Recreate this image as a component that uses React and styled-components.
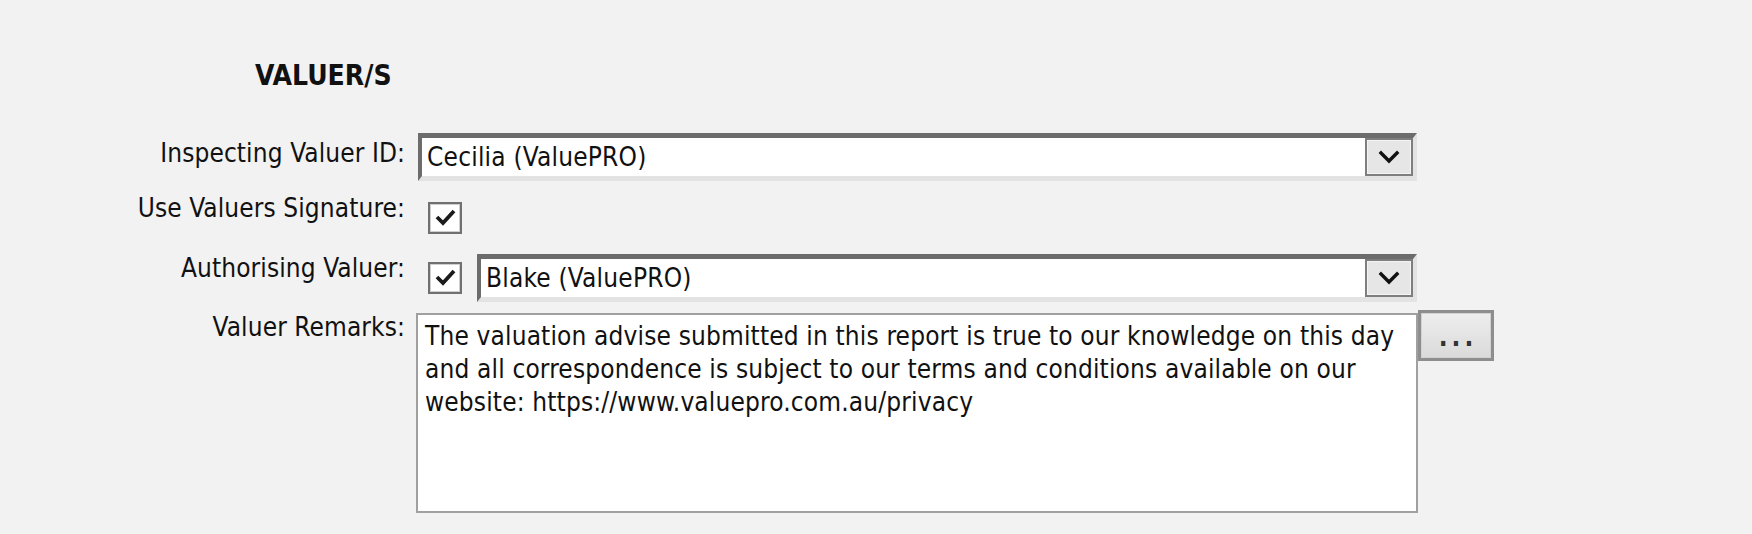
import React from 'react';
import styled, { createGlobalStyle } from 'styled-components';

const GlobalStyle = createGlobalStyle`
  html, body {
    margin: 0;
    padding: 0;
    background: #f2f2f2;
  }
`;

const remarks =
  'The valuation advise submitted in this report is true to our knowledge on this day\n' +
  'and all correspondence is subject to our terms and conditions available on our\n' +
  'website: https://www.valuepro.com.au/privacy';

const Chevron = () => (
  <svg width="22" height="14" viewBox="0 0 22 14">
    <polyline points="3,3 11,11 19,3" fill="none" stroke="#111" strokeWidth="3.4" strokeLinecap="square" />
  </svg>
);

const Check = () => (
  <svg width="27" height="27" viewBox="0 0 27 27">
    <polyline points="5,12 11,18 22,6" fill="none" stroke="#1b1b1b" strokeWidth="3.8" />
  </svg>
);

const Combo = ({ value }) => (
  <ComboBox>
    <ComboText>{value}</ComboText>
    <DropButton><Chevron /></DropButton>
  </ComboBox>
);

const App = () => {
  return (
    <Page>
      <GlobalStyle />
      <Title>VALUER/S</Title>

      <Row top={40}>
        <Label pad={5}>Inspecting Valuer ID:</Label>
        <Field>
          <Combo value="Cecilia (ValuePRO)" />
        </Field>
      </Row>

      <Row top={12}>
        <Label>Use Valuers Signature:</Label>
        <Field>
          <CheckBox pad={9}><Check /></CheckBox>
        </Field>
      </Row>

      <Row top={19}>
        <Label>Authorising Valuer:</Label>
        <Field>
          <CheckBox pad={9}><Check /></CheckBox>
          <ComboSlot><Combo value="Blake (ValuePRO)" /></ComboSlot>
        </Field>
      </Row>

      <Row top={8}>
        <Label pad={2}>Valuer Remarks:</Label>
        <Field wide>
          <Remarks readOnly value={remarks} />
          <EllipsisButton>...</EllipsisButton>
        </Field>
      </Row>
    </Page>
  );
};

const Page = styled.div`
  min-height: 534px;
  box-sizing: border-box;
  padding-top: 59px;
  background: #f2f2f2;
  color: #111;
  font-family: 'DejaVu Sans Condensed', 'DejaVu Sans', sans-serif;
  font-size: 26px;
`;

const Title = styled.div`
  padding-left: 255px;
  font-size: 28px;
  font-weight: 700;
  line-height: 34px;
  color: #111;
`;

const Row = styled.div`
  display: flex;
  align-items: flex-start;
  margin-top: ${props => props.top}px;
`;

const Label = styled.div`
  width: 405px;
  flex: none;
  text-align: right;
  line-height: 30px;
  letter-spacing: 0.1px;
  padding-top: ${props => props.pad || 0}px;
`;

const Field = styled.div`
  display: flex;
  align-items: flex-start;
  margin-left: 11px;
  width: ${props => (props.wide ? 1078 : 1001)}px;
`;

const ComboBox = styled.div`
  flex: 1;
  display: flex;
  align-items: stretch;
  height: 48px;
  box-sizing: border-box;
  margin-left: 2px;
  background: #fff;
  border-style: solid;
  border-width: 5px 4px 5px 4px;
  border-color: #6c6c6c #e3e3e3 #e3e3e3 #6c6c6c;
`;

const ComboText = styled.div`
  flex: 1;
  display: flex;
  align-items: center;
  padding-left: 5px;
  line-height: 30px;
  letter-spacing: 0.2px;
  white-space: nowrap;
`;

const DropButton = styled.div`
  width: 48px;
  flex: none;
  box-sizing: border-box;
  display: flex;
  align-items: center;
  justify-content: center;
  background: #e6e6e6;
  border: 2px solid #7e7e7e;
  box-shadow: inset 0 0 0 1px #f4f4f4;
`;

const ComboSlot = styled.div`
  flex: 1;
  display: flex;
  margin-left: 13px;
  margin-top: 1px;
`;

const CheckBox = styled.div`
  width: 34px;
  height: 32px;
  flex: none;
  box-sizing: border-box;
  margin-left: 12px;
  margin-top: ${props => props.pad || 0}px;
  display: flex;
  align-items: center;
  justify-content: center;
  background: #fff;
  border: 2px solid #707070;
  box-shadow: inset 0 0 0 1px #cfcfcf;
`;

const Remarks = styled.textarea`
  width: 1002px;
  height: 200px;
  flex: none;
  box-sizing: border-box;
  margin: 3px 0 0;
  padding: 5px 7px;
  border: 2px solid #a0a0a0;
  background: #fff;
  color: #111;
  font-family: inherit;
  font-size: 26px;
  line-height: 33px;
  letter-spacing: 0.15px;
  resize: none;
  overflow: hidden;
  outline: none;
`;

const EllipsisButton = styled.div`
  width: 76px;
  height: 51px;
  flex: none;
  box-sizing: border-box;
  padding-top: 2px;
  display: flex;
  align-items: center;
  justify-content: center;
  border: 3px solid #8e8e8e;
  box-shadow: inset 0 0 0 1px #d2d2d2;
  background: linear-gradient(#eeeeee, #dadada);
  color: #333;
  font-weight: 700;
  letter-spacing: 4px;
  text-indent: 4px;
`;

export default App;
